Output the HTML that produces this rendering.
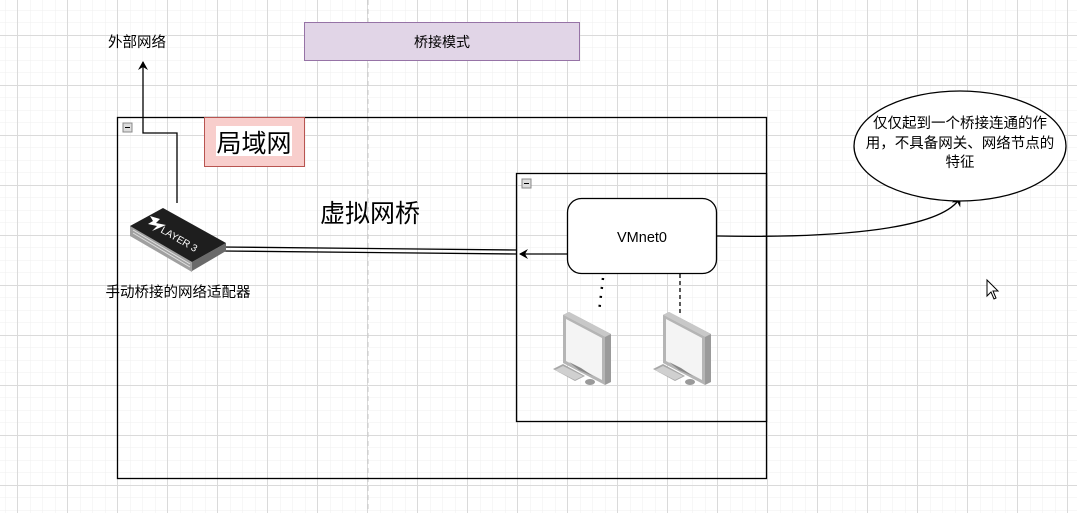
<!DOCTYPE html>
<html><head><meta charset="utf-8"><style>
html,body{margin:0;padding:0;background:#fff}
svg{display:block}
text{font-family:"Liberation Sans","Noto Sans CJK SC",sans-serif}
</style></head><body>
<svg width="1077" height="513" viewBox="0 0 1077 513" xmlns="http://www.w3.org/2000/svg">
<defs>
<pattern id="minor" x="5" y="10" width="12.5" height="12.5" patternUnits="userSpaceOnUse">
<path d="M0 0H12.5M0 0V12.5" stroke="#efefef" stroke-width="1" fill="none"/>
</pattern>
<pattern id="major" x="17" y="35" width="50" height="50" patternUnits="userSpaceOnUse">
<path d="M0 0.5H50M0.5 0V50" stroke="#dadada" stroke-width="1" fill="none"/>
</pattern>
<marker id="arr" markerWidth="10" markerHeight="10" refX="8" refY="5" orient="auto" markerUnits="userSpaceOnUse">
<path d="M0 0L9 5L0 10L3 5Z" fill="#000"/>
</marker>
<g id="pc">
<path d="M10 5L16 2L58 24V72L52 75Z" fill="#9a9a9a"/>
<path d="M10 5L16 2L58 24L52 27Z" fill="#c8c8c8"/>
<path d="M10 5L52 27V75L10 53Z" fill="#b5b5b5"/>
<path d="M13 9L49 28V70L13 51Z" fill="#f4f4f4"/>
<path d="M16 52L28 58L40 66L26 60Z" fill="#888"/>
<path d="M0 59L10 54L32 66L22 71Z" fill="#a8a8a8"/>
<path d="M2 60L10 56L30 66L22 70Z" fill="#d0d0d0"/>
<ellipse cx="37" cy="72" rx="5" ry="3" fill="#9a9a9a"/>
</g>
</defs>
<rect width="1077" height="513" fill="url(#minor)"/>
<rect width="1077" height="513" fill="url(#major)"/>
<line x1="368" y1="0" x2="368" y2="513" stroke="#c8c8c8" stroke-width="1" stroke-dasharray="5,4"/>

<rect x="304.5" y="22.5" width="275" height="38" fill="#e1d5e7" stroke="#9673a6"/>
<text x="442" y="47" font-size="14" text-anchor="middle">桥接模式</text>

<text x="137" y="47" font-size="14.5" text-anchor="middle">外部网络</text>

<rect x="117.5" y="117.5" width="649" height="361" fill="none" stroke="#000" stroke-width="1.3"/>
<rect x="123" y="123" width="9" height="9" fill="#ddd" stroke="#888"/>
<line x1="125" y1="127.5" x2="130" y2="127.5" stroke="#000"/>

<polyline points="177,203 177,133 143,133 143,62" fill="none" stroke="#000" stroke-width="1.3" marker-end="url(#arr)"/>

<rect x="204.5" y="117.5" width="100" height="49" fill="#f8cecc" stroke="#b85450"/>
<rect x="216" y="126" width="76" height="30" fill="#fff"/>
<text x="254" y="152" font-size="25" text-anchor="middle">局域网</text>

<text x="370" y="222" font-size="25" text-anchor="middle">虚拟网桥</text>

<line x1="222" y1="247" x2="516" y2="250" stroke="#000" stroke-width="1.3"/>
<line x1="222" y1="251" x2="516" y2="254" stroke="#000" stroke-width="1.3"/>

<!-- switch -->
<path d="M130 226L192 262V272L130 236Z" fill="#a0a0a0"/>
<path d="M192 262L226 243V251L192 271Z" fill="#6a6a6a"/>
<path d="M130 226L163 208L226 243L192 262Z" fill="#1e1e1e"/>
<path d="M133 230L190 264M133 233L190 267" stroke="#e0e0e0" stroke-width="1"/>
<path d="M150 216L160 219L156 223L166 225L152 231L157 226L148 224L153 221Z" fill="#fff"/>
<text x="0" y="0" font-size="10" fill="#fff" transform="translate(160,232) rotate(30)">LAYER 3</text>
<text x="178" y="297" font-size="14.5" text-anchor="middle">手动桥接的网络适配器</text>

<rect x="516.5" y="173.5" width="250" height="248" fill="none" stroke="#000" stroke-width="1.3"/>
<rect x="522" y="179" width="9" height="9" fill="#ddd" stroke="#888"/>
<line x1="524" y1="183.5" x2="529" y2="183.5" stroke="#000"/>

<rect x="567.5" y="198.5" width="149" height="75" rx="14" fill="#fff" stroke="#000" stroke-width="1.3"/>
<text x="642" y="242" font-size="14.5" text-anchor="middle">VMnet0</text>
<line x1="567" y1="254" x2="520" y2="254" stroke="#000" stroke-width="1.3" marker-end="url(#arr)"/>

<line x1="603" y1="278" x2="599" y2="312" stroke="#000" stroke-width="2.5" stroke-dasharray="2,7"/>
<line x1="680" y1="274" x2="680" y2="314" stroke="#000" stroke-width="1.3" stroke-dasharray="4,3"/>

<use href="#pc" x="553" y="310"/>
<use href="#pc" x="653" y="310"/>

<path d="M717 236C820 238 940 232 960 198" fill="none" stroke="#000" stroke-width="1.3" marker-end="url(#arr)"/>

<ellipse cx="960" cy="146" rx="106" ry="55" fill="#fff" stroke="#000" stroke-width="1.3"/>
<text x="960" y="128" font-size="14.5" text-anchor="middle">仅仅起到一个桥接连通的作</text>
<text x="960" y="148" font-size="14.5" text-anchor="middle">用，不具备网关、网络节点的</text>
<text x="960" y="167" font-size="14.5" text-anchor="middle">特征</text>

<path d="M987 280L987 296L991 292L994 299L996 298L993 291L998 291Z" fill="#fff" stroke="#000" stroke-width="1"/>
</svg>
</body></html>
